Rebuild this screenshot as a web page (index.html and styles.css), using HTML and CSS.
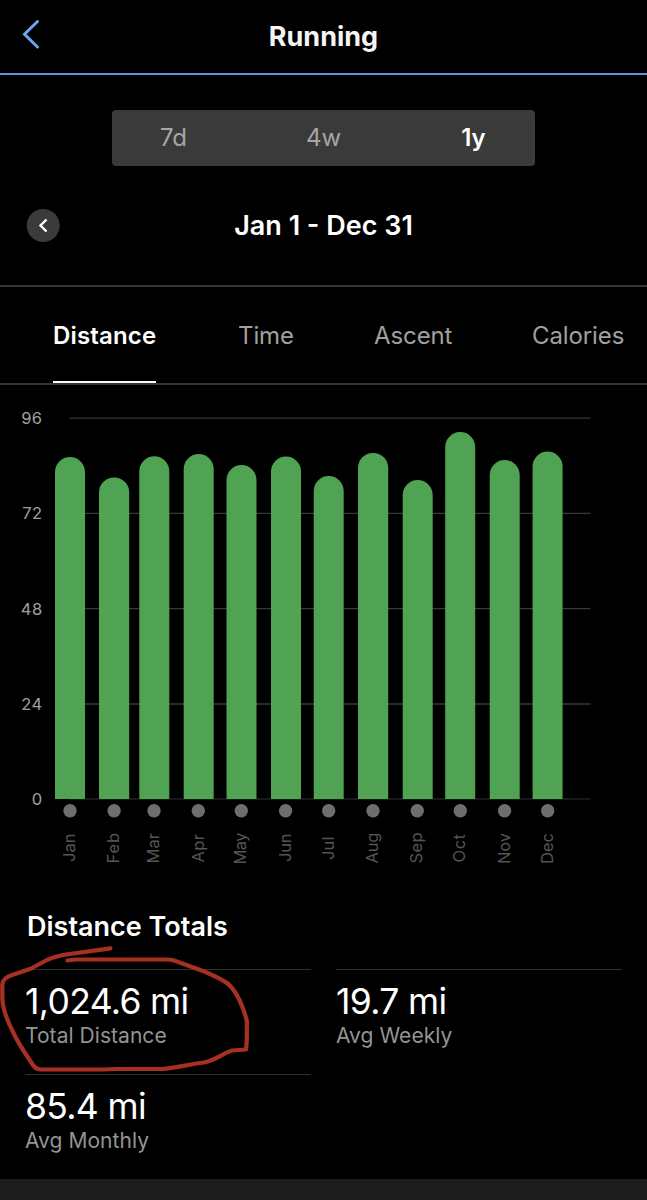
FILE: index.html
```
<!DOCTYPE html>
<html lang="en">
<head>
<meta charset="utf-8">
<title>Running</title>
<link rel="stylesheet" href="styles.css">
</head>
<body>
<main class="screen">
  <header class="header">
    <svg class="back" width="20" height="32" viewBox="0 0 20 32"><path d="M16.5 3.500 L3.500 16.200 L16.5 29"/></svg>
    <h1 class="title">Running</h1>
  </header>
  <nav class="range">
    <span class="range-item">7d</span>
    <span class="range-item">4w</span>
    <span class="range-item range-on">1y</span>
  </nav>
  <section class="period">
    <svg class="prev" width="34" height="34" viewBox="0 0 34 34"><circle cx="17.2" cy="17.5" r="16.5"/><path d="M20.500 11.500 L14.500 17.500 L20.500 23.500"/></svg>
    <span class="period-label">Jan 1 - Dec 31</span>
  </section>
  <nav class="tabs">
    <span class="tab tab-on">Distance</span>
    <span class="tab">Time</span>
    <span class="tab">Ascent</span>
    <span class="tab">Calories</span>
  </nav>
  <svg class="chart" width="647" height="500" viewBox="0 385 647 500">
    <g class="grid">
      <path d="M69.5 418.2H590.5M69.5 513.3H590.5M69.5 608.6H590.5M69.5 704H590.5"/>
      <path class="base" d="M69.5 799H590.5"/>
    </g>
    <g class="axis">
      <text x="42.5" y="423.8">96</text>
      <text x="42.5" y="519.2">72</text>
      <text x="42.5" y="614.500">48</text>
      <text x="42.5" y="710">24</text>
      <text x="42.5" y="805.2">0</text>
    </g>
    <g class="bars">
      <path d="M55 799V472a15 15 0 0 1 30 0V799z"/>
      <path d="M99 799V492.5a15 15 0 0 1 30.2 0V799z"/>
      <path d="M139.3 799V471.3a15 15 0 0 1 30 0V799z"/>
      <path d="M183.7 799V469a15 15 0 0 1 30 0V799z"/>
      <path d="M226.5 799V480a15 15 0 0 1 30 0V799z"/>
      <path d="M271 799V471.5a15 15 0 0 1 30 0V799z"/>
      <path d="M313.7 799V491a15 15 0 0 1 30 0V799z"/>
      <path d="M358 799V468a15 15 0 0 1 30.2 0V799z"/>
      <path d="M402.7 799V495a15 15 0 0 1 30 0V799z"/>
      <path d="M445.2 799V447a15 15 0 0 1 30 0V799z"/>
      <path d="M489.7 799V475a15 15 0 0 1 30 0V799z"/>
      <path d="M532.6 799V466.5a15 15 0 0 1 30 0V799z"/>
    </g>
    <g class="dots">
      <circle cx="70" cy="810.8" r="6.7"/><circle cx="114.1" cy="810.8" r="6.7"/>
      <circle cx="154" cy="810.8" r="6.7"/><circle cx="198.3" cy="810.8" r="6.7"/>
      <circle cx="241.3" cy="810.8" r="6.7"/><circle cx="285.6" cy="810.8" r="6.7"/>
      <circle cx="328.7" cy="810.8" r="6.7"/><circle cx="373" cy="810.8" r="6.7"/>
      <circle cx="417.3" cy="810.8" r="6.7"/><circle cx="460.3" cy="810.8" r="6.7"/>
      <circle cx="504.6" cy="810.8" r="6.7"/><circle cx="547.7" cy="810.8" r="6.7"/>
    </g>
    <g class="months">
      <text transform="translate(75 862) rotate(-90)" textLength="28.500">Jan</text>
      <text transform="translate(119 863.5) rotate(-90)" textLength="30.500">Feb</text>
      <text transform="translate(159 863.5) rotate(-90)" textLength="30.500">Mar</text>
      <text transform="translate(203.5 862.500) rotate(-90)" textLength="28.500">Apr</text>
      <text transform="translate(246.3 864.5) rotate(-90)" textLength="32">May</text>
      <text transform="translate(290.6 862) rotate(-90)" textLength="28.500">Jun</text>
      <text transform="translate(333.7 860) rotate(-90)" textLength="23.5">Jul</text>
      <text transform="translate(378 863.5) rotate(-90)" textLength="31">Aug</text>
      <text transform="translate(422.3 863.5) rotate(-90)" textLength="31">Sep</text>
      <text transform="translate(465.3 862.5) rotate(-90)" textLength="28.500">Oct</text>
      <text transform="translate(509.6 864) rotate(-90)" textLength="31">Nov</text>
      <text transform="translate(552.7 864) rotate(-90)" textLength="31">Dec</text>
    </g>
  </svg>
  <section class="totals">
    <h2 class="totals-title">Distance Totals</h2>
    <div class="stats">
      <div class="stat">
        <div class="value">1,024.6 mi</div><div class="label">Total Distance</div>
      </div>
      <div class="stat">
        <div class="value">19.7 mi</div><div class="label">Avg Weekly</div>
      </div>
      <div class="stat">
        <div class="value">85.4 mi</div><div class="label">Avg Monthly</div>
      </div>
    </div>
    <svg class="marker" width="260" height="140" viewBox="0 940 260 140">
      <path d="M110.5 948.3 L66 954.5 Q55 956.5 48 959.5 L30 969 L12 975 Q3 978 2.3 984 V999 C3 1011 8 1022 13 1032 C19 1045 27 1056 33 1065 Q36 1069.5 41 1069.5 H104 L116 1069 H162 C176 1068 190 1064 204 1062.500 C216 1060 224 1053 232 1050.500 L246 1049.500 C247.500 1039 246.500 1030 247 1022 Q245 1012 239 999 Q232 985 223 980.500 Q215 976 203 971 L174 960.500 Q171 959.500 166 959.500 H76 L67.500 960.500"/>
    </svg>
  </section>
  <footer class="footer"></footer>
</main>
</body>
</html>
```
FILE: styles.css
```
* { box-sizing: border-box; }
body { margin: 0; background: #000; }
.screen {
  width: 647px; height: 1200px; overflow: hidden;
  display: flex; flex-direction: column;
  background: #000; color: #fff;
  font-family: Inter, "Liberation Sans", sans-serif;
}
.header {
  flex: none; height: 75px; border-bottom: 2px solid #6390d2;
  display: grid; grid-template-columns: 60px 1fr 60px;
}
.back { margin: 18px 0 0 21px; fill: none; stroke: #6ea3f0; stroke-width: 3; stroke-linecap: round; }
.title { margin: 20px 0 0; font-size: 27px; line-height: 34px; font-weight: 700; text-align: center; color: #f5f5f5; }
.range {
  flex: none; width: 423px; height: 56px; margin: 35px 0 0 112px;
  display: grid; grid-template-columns: 123px 177px 123px;
  background: #3a3a3a; border-radius: 4px; color: #a6a6a6;
  font-size: 24px; line-height: 56px; text-align: center;
}
.range-on { color: #fff; font-weight: 600; }
.period {
  flex: none; height: 121px; border-bottom: 2px solid #343434;
  display: grid; grid-template-columns: 60px 1fr 60px;
}
.prev { margin: 42px 0 0 26px; fill: #3b3b3b; }
.prev path { fill: none; stroke: #fff; stroke-width: 2.4; }
.period-label { margin-top: 43px; font-size: 27px; line-height: 34px; font-weight: 600; text-align: center; }
.tabs {
  flex: none; height: 98px; border-bottom: 2px solid #363636; padding-left: 53px;
  display: grid; grid-template-columns: 185px 136px 158px 100px; justify-items: start;
  font-size: 24px; line-height: 98px; letter-spacing: -.1px; color: #a0a0a0;
}
.tab { height: 96px; }
.tab-on { color: #fff; font-weight: 600; letter-spacing: .15px; border-bottom: 2px solid #fff; }
.chart { flex: none; display: block; }
.grid path { stroke: #393939; stroke-width: 1.3; fill: none; }
.grid .base { stroke: #202020; }
.axis { fill: #a0a0a0; font-size: 16.500px; text-anchor: end; letter-spacing: .4px; }
.bars { fill: #4fa353; }
.dots { fill: #6e6e6e; }
.months { fill: #555; font-size: 16.500px; }
.totals { flex: none; position: relative; height: 294px; padding: 25px 25px 0; }
.totals-title { margin: 0 0 0 2px; font-size: 27px; line-height: 34px; font-weight: 600; height: 59px; }
.stats { display: grid; grid-template-columns: 286px 286px; column-gap: 25px; grid-auto-rows: 105px; }
.stat { border-top: 1px solid #303030; padding-top: 13px; }
.value { font-size: 35.500px; line-height: 38px; letter-spacing: -.65px; white-space: nowrap; }
.label { font-size: 21px; line-height: 30px; letter-spacing: .05px; color: #949494; white-space: nowrap; }
.marker { position: absolute; left: 0; top: 55px; fill: none; stroke: #a63022; stroke-width: 4.200; stroke-linecap: round; stroke-linejoin: round; }
.footer { flex: none; height: 21px; background: #1c1c1c; }
```
